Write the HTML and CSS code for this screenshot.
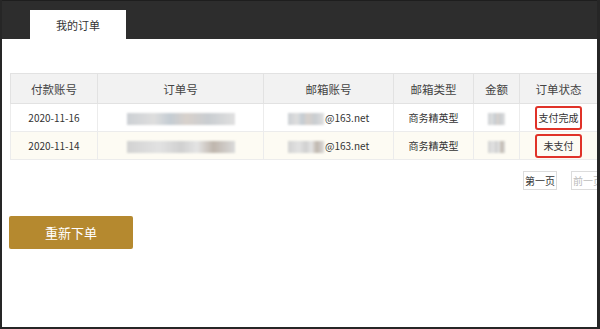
FILE: index.html
```html
<!DOCTYPE html>
<html lang="zh-CN">
<head>
    <meta charset="UTF-8">
    <meta name="viewport" content="width=device-width, initial-scale=1.0">
    <title>我的订单</title>
    <link rel="stylesheet" href="styles.css">
</head>
<body>
    <div class="frame">
        <div class="topbar">
            <div class="tab">我的订单</div>
        </div>

        <div class="content">
            <table class="orders">
                <colgroup>
                    <col style="width: 87px">
                    <col style="width: 166px">
                    <col style="width: 130px">
                    <col style="width: 80px">
                    <col style="width: 46px">
                    <col style="width: 78px">
                </colgroup>
                <thead>
                    <tr>
                        <th>付款账号</th>
                        <th>订单号</th>
                        <th>邮箱账号</th>
                        <th>邮箱类型</th>
                        <th>金额</th>
                        <th>订单状态</th>
                    </tr>
                </thead>
                <tbody>
                    <tr>
                        <td>2020-11-16</td>
                        <td><span class="mask mask-order"></span></td>
                        <td class="mail"><span class="mask mask-mail"></span>@163.net</td>
                        <td>商务精英型</td>
                        <td><span class="mask mask-money"></span></td>
                        <td><span class="state">支付完成</span></td>
                    </tr>
                    <tr class="alt">
                        <td>2020-11-14</td>
                        <td><span class="mask mask-order two"></span></td>
                        <td class="mail"><span class="mask mask-mail two"></span>@163.net</td>
                        <td>商务精英型</td>
                        <td><span class="mask mask-money two"></span></td>
                        <td><span class="state">未支付</span></td>
                    </tr>
                </tbody>
            </table>

            <div class="pager">
                <span class="page-btn">第一页</span>
                <span class="page-btn disabled">前一页</span>
            </div>

            <button class="reorder">重新下单</button>
        </div>
    </div>
</body>
</html>
```

FILE: styles.css
```css
body {
    margin: 0;
    font-family: "Noto Sans CJK SC", "Noto Sans", sans-serif;
    background: #fff;
}
.frame {
    width: 600px;
    height: 329px;
    box-sizing: border-box;
    border-left: 2px solid #262626;
    border-right: 3px solid #262626;
    border-bottom: 2px solid #262626;
    overflow: hidden;
}
.topbar {
    height: 39px;
    background: #2d2d2d;
    border-top: 1px solid #1e1e1e;
    box-sizing: border-box;
    padding: 9px 0 0 28px;
    display: flex;
}
.tab {
    width: 96px;
    background: #fff;
    color: #333;
    font-size: 11px;
    display: flex;
    align-items: center;
    justify-content: center;
}
.content {
    padding: 34px 0 0 8px;
}
.orders {
    border-collapse: collapse;
    table-layout: fixed;
    width: 587px;
    font-size: 10px;
    color: #333;
}
.orders th {
    height: 29px;
    background: #f2f2f2;
    color: #444;
    font-size: 11.5px;
    font-weight: normal;
    border: 1px solid #e2e2e2;
    padding: 0;
}
.orders td {
    height: 27px;
    text-align: center;
    border: 1px solid #ececec;
    padding: 0;
}
.orders tr.alt td { background: #fdfbf3; }
.mask {
    display: inline-block;
    vertical-align: middle;
    height: 12px;
    filter: blur(1.2px);
    background: linear-gradient(90deg, #ccd0d4, #dedede 25%, #c4ccd3 40%, #d8d1cc 55%, #c9cdd1 75%, #e0e0e0);
}
.mask.two {
    background: linear-gradient(90deg, #d2d2d2, #e2e2e2 30%, #d0d0d0 50%, #e4e4e4 65%, #bfb6ad 80%, #dadada);
}
.mask-order { width: 108px; }
.mask-mail { width: 36px; margin-right: 1px; }
.mask-money { width: 17px; }
.orders td.mail { text-align: left; }
.mail .mask { margin-left: 24px; }
.state {
    display: inline-block;
    width: 41px;
    padding: 4px 1px;
    border: 2px solid #e03228;
    border-radius: 3px;
    line-height: 12px;
}
.pager {
    display: flex;
    gap: 14px;
    margin: 11px 0 0 513px;
}
.page-btn {
    flex: none;
    width: 32px;
    height: 17px;
    border: 1px solid #dcdcdc;
    font-size: 10px;
    color: #333;
    display: flex;
    align-items: center;
    justify-content: center;
}
.page-btn.disabled { color: #bbb; }
.reorder {
    display: block;
    margin: 26px 0 0 -1px;
    width: 124px;
    height: 33px;
    border: none;
    border-radius: 2px;
    background: #b5892f;
    color: #fff;
    font-family: inherit;
    font-size: 13px;
}
```
